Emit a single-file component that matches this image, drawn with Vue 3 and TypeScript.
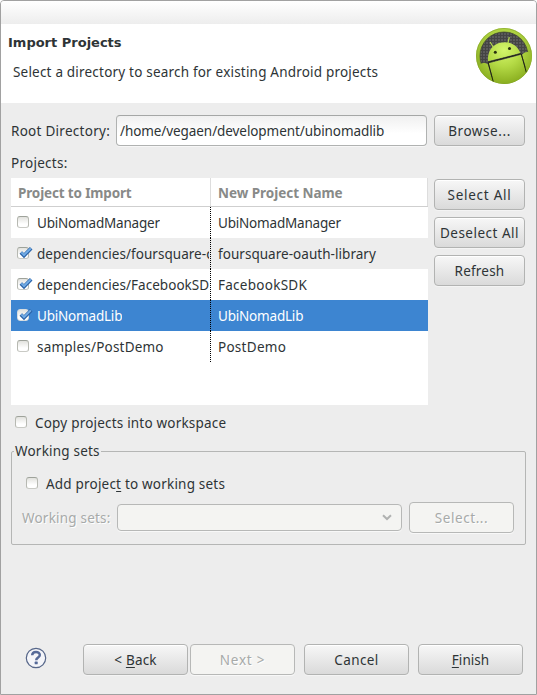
<script setup lang="ts">
import { ref } from 'vue'

interface Project {
  path: string
  name: string
  checked: boolean
  pathTrack: string
  nameTrack: string
}

const rootDirectory = ref('/home/vegaen/development/ubinomadlib')
const selected = ref('UbiNomadLib')
const copyProjects = ref(false)
const addToSets = ref(false)

const projects = ref<Project[]>([
  { path: 'UbiNomadManager', name: 'UbiNomadManager', checked: false, pathTrack: 'tn2', nameTrack: 'tn2' },
  { path: 'dependencies/foursquare-oauth-library', name: 'foursquare-oauth-library', checked: true, pathTrack: 't0', nameTrack: 't0' },
  { path: 'dependencies/FacebookSDK', name: 'FacebookSDK', checked: true, pathTrack: 't0', nameTrack: 't3' },
  { path: 'UbiNomadLib', name: 'UbiNomadLib', checked: true, pathTrack: 'tn2', nameTrack: 'tn2' },
  { path: 'samples/PostDemo', name: 'PostDemo', checked: false, pathTrack: 't2', nameTrack: 't3' },
])
</script>

<template>
  <main class="window">
    <div class="titlebar"></div>
    <header class="banner">
      <div>
        <h1>Import Projects</h1>
        <p class="t2">Select a directory to search for existing Android projects</p>
      </div>
      <svg class="logo" width="58" height="58" viewBox="475 27 58 58">
        <defs>
          <linearGradient id="rim" x1="0" y1="0" x2="0" y2="1">
            <stop offset="0" stop-color="#b2d644" />
            <stop offset="1" stop-color="#7b9f17" />
          </linearGradient>
          <radialGradient id="skin" gradientUnits="userSpaceOnUse" cx="504" cy="50" r="36">
            <stop offset="0" stop-color="#d4f56c" />
            <stop offset="0.45" stop-color="#b4da45" />
            <stop offset="1" stop-color="#84a81a" />
          </radialGradient>
          <pattern id="mesh" width="3" height="3" patternUnits="userSpaceOnUse">
            <rect width="3" height="3" fill="#444" />
            <rect width="2" height="2" fill="#5a5a5a" />
          </pattern>
          <clipPath id="disc"><circle cx="504" cy="56" r="27.6" /></clipPath>
        </defs>
        <circle cx="504" cy="56" r="28" fill="url(#rim)" />
        <circle cx="504" cy="56" r="27.5" fill="none" stroke="#86a62c" stroke-width="0.7" />
        <circle cx="504" cy="56" r="24" fill="url(#mesh)" stroke="#3c4130" stroke-width="0.7" />
        <g clip-path="url(#disc)">
          <g fill="url(#skin)">
            <path d="M488 61.3C487 51 493 44.5 500 42.8C508.5 40.8 517 44 520.3 53Z" />
            <path d="M488.6 63.3L521 54.8L527 75Q512 90 493.8 82Z" />
            <path d="M479 66Q483 60.5 488 64.5L493 83H484L475 70Z" />
            <path d="M522 55Q525 50 532 53L534 66L528 75Z" />
          </g>
          <path d="M488 62.3L521 53.8M488.3 63L493.3 82M521.3 54L526.5 73" fill="none" stroke="#20270e" stroke-width="1" />
          <path d="M492.9 46.5L490.4 42.5M508 42.8L509.2 37.5" stroke="#b7db4f" stroke-width="1.2" stroke-linecap="round" />
          <circle cx="495.3" cy="52.2" r="1.5" fill="#29310f" />
          <circle cx="509.5" cy="48.5" r="1.5" fill="#29310f" />
        </g>
      </svg>
    </header>

    <section class="content">
      <div class="root-row">
        <label class="root-label t3">Root Directory:</label>
        <div class="entry"><span class="tn06">{{ rootDirectory }}</span></div>
        <button class="btn side"><span class="t6">Browse...</span></button>
      </div>

      <div class="projects-label t3">Projects:</div>
      <div class="project-area">
        <div class="table">
          <div class="thead">
            <div class="col-a b1">Project to Import</div>
            <div class="col-b b3">New Project Name</div>
          </div>
          <div
            v-for="(p, i) in projects"
            :key="p.path"
            class="row"
            :class="{ odd: i % 2 === 1, sel: p.name === selected }"
            @click="selected = p.name"
          >
            <div class="cell-a">
              <span class="check" :class="{ pale: p.name === selected }" @click.stop="p.checked = !p.checked">
                <svg v-if="p.checked" class="tick" width="18" height="15" viewBox="0 0 18 15">
                  <path d="M3.8 7.4L7 10.6L14.2 3.2" fill="none" stroke="#2a62a6" stroke-width="3.6" />
                  <path d="M4.3 7.4L7 10L13.8 3.4" fill="none" stroke="#72ace6" stroke-width="2" />
                </svg>
              </span>
              <span class="path" :class="p.pathTrack">{{ p.path }}</span>
            </div>
            <div class="cell-b" :class="p.nameTrack">{{ p.name }}</div>
          </div>
        </div>
        <div class="side-buttons">
          <button class="btn side"><span class="t7">Select All</span></button>
          <button class="btn side"><span class="t5">Deselect All</span></button>
          <button class="btn side"><span class="t2">Refresh</span></button>
        </div>
      </div>

      <div class="copy-row" @click="copyProjects = !copyProjects">
        <span class="check"></span><span class="t2">Copy projects into workspace</span>
      </div>

      <fieldset class="sets">
        <legend class="t2">Working sets</legend>
        <div class="add-row" @click="addToSets = !addToSets">
          <span class="check"></span><span class="t2">Add projec<u>t</u> to working sets</span>
        </div>
        <div class="sets-row">
          <span class="sets-label t2">Working sets:</span>
          <div class="combo">
            <svg width="10" height="7" viewBox="0 0 10 7"><path d="M1 1.2L5 5L9 1.2" fill="none" stroke="#b0b2b1" stroke-width="2" /></svg>
          </div>
          <button class="btn wide off"><span class="t6">Select...</span></button>
        </div>
      </fieldset>
    </section>

    <footer class="actions">
      <svg class="help" width="22" height="22" viewBox="0 0 22 22">
        <circle cx="11" cy="11" r="9.7" fill="#f4f5f9" stroke="#566689" stroke-width="1.2" />
        <path d="M7.2 8.3C7.2 3.8 14.8 3.8 14.8 8.1C14.8 10.6 11.2 10.5 11.2 13.3" fill="none" stroke="#566a98" stroke-width="2.5" />
        <rect x="9.7" y="14.6" width="3" height="2.7" rx="0.6" fill="#566a98" />
      </svg>
      <button class="btn wide back"><span class="t2">&lt; <u>B</u>ack</span></button>
      <button class="btn wide off next"><span class="t7">Next &gt;</span></button>
      <button class="btn wide cancel"><span class="t4">Cancel</span></button>
      <button class="btn wide finish"><span class="t0"><u>F</u>inish</span></button>
    </footer>
  </main>
</template>

<style>
body { background: #fff; }
</style>

<style scoped>
* { box-sizing: border-box; }
.window {
  width: 537px;
  height: 695px;
  display: flex;
  flex-direction: column;
  border: 1px solid #a1a1a1;
  border-radius: 4px 4px 0 0;
  background: #ededed;
  color: #2e3436;
  font: 13.5px/18px "Noto Sans", "Open Sans", sans-serif;
  overflow: hidden;
  white-space: nowrap;
}
.titlebar { height: 23px; background: linear-gradient(#fff, #ededed); }
.banner {
  height: 79px;
  padding: 3px 3px 0 7px;
  display: flex;
  justify-content: space-between;
  background: #fff;
}
h1 { margin: 7px 0 0; font: bold 13px/18px "DejaVu Sans", sans-serif; }
p { margin: 11px 0 0 5px; }
.logo { display: block; }
.content { padding: 12px 10px 0; }
.root-row { display: flex; align-items: center; }
.root-label { width: 105px; }
.entry {
  width: 311px;
  height: 31px;
  padding: 6px 3px 0;
  border: 1px solid #b0b2b1;
  border-top-color: #a5a7a6;
  border-radius: 4px;
  background: linear-gradient(#f0f0f0, #fff 60%);
  box-shadow: 0 1px 0 #f7f7f7;
}
.btn {
  height: 31px;
  padding: 1px 0 0;
  border: 1px solid #b2b3b2;
  border-radius: 4px;
  background: linear-gradient(#f7f7f7, #dadada);
  box-shadow: inset 0 1px 0 #fff, 0 1px 0 #f4f4f4;
  color: inherit;
  font: inherit;
  text-align: center;
}
.side { width: 91px; }
.root-row .side { margin-left: 7px; }
.wide { width: 105px; }
.off {
  background: #f4f4f2;
  border-color: #b7b8b7;
  color: #a7aaa9;
  box-shadow: 0 1px 0 #f8f8f8;
  text-shadow: 1px 1px 0 #fff;
}
.projects-label { margin-top: 8px; }
.project-area { display: flex; gap: 6px; margin-top: 6px; }
.table { width: 417px; height: 227px; background: #fff; }
.thead {
  height: 29px;
  display: flex;
  border-bottom: 1px solid #cfcfcf;
  color: #888a88;
  font: bold 13.5px/31px "Noto Sans", sans-serif;
}
.col-a { width: 200px; padding-left: 7px; border-right: 1px solid #ddd; }
.col-b { flex: 1; padding-left: 7px; border-right: 1px solid #ddd; }
.row { height: 31px; display: flex; line-height: 32px; }
.odd { background: #ededed; }
.sel { background: #3d85d1; color: #fff; }
.cell-a {
  flex: none;
  width: 200px;
  height: 31px;
  padding: 0 2px 0 6px;
  display: flex;
  background: repeating-linear-gradient(#000 0 1px, transparent 1px 2px) right top / 1px 31px no-repeat;
}
.path { min-width: 0; margin-left: 8px; overflow: hidden; }
.cell-b { padding-left: 7px; }
.check {
  position: relative;
  flex: none;
  width: 12px;
  height: 12px;
  border: 1px solid #aeb0a9;
  border-color: #9ea29a #b7b9b2 #c9cac5;
  border-radius: 3px;
  background: linear-gradient(#e2e2de, #fff 70%);
}
.cell-a .check { margin-top: 9px; }
.pale { border-color: #d8dde0; }
.tick { position: absolute; left: -1px; top: -3px; }
.side-buttons { display: flex; flex-direction: column; gap: 7px; padding-top: 1px; }
.copy-row { display: flex; align-items: center; gap: 8px; margin: 9px 0 0 4px; }
.copy-row .check, .add-row .check { margin-top: -2px; }
.sets {
  width: 515px;
  height: 103px;
  margin: 10px 0 0;
  padding: 0 10px;
  border: 1px solid #b5b6b5;
  border-radius: 2px;
}
legend { margin-left: -8px; padding: 0 1px 0 1px; line-height: 18px; }
.add-row { display: flex; align-items: center; gap: 8px; margin: 15px 0 0 4px; }
.sets-row { display: flex; align-items: center; margin-top: 9px; }
.sets-label { width: 95px; color: #a7aaa9; text-shadow: 1px 1px 0 #fff; }
.combo {
  width: 285px;
  height: 27px;
  padding-right: 9px;
  display: flex;
  align-items: center;
  justify-content: flex-end;
  border: 1px solid #b7b8b7;
  border-radius: 4px;
  background: #f4f4f2;
  box-shadow: 0 1px 0 #f8f8f8;
}
.sets-row .wide { margin-left: 7px; }
.actions { display: flex; align-items: center; margin-top: auto; padding: 0 0 19px 24px; }
.help { margin-bottom: 3px; }
.back { margin-left: 36px; }
.next { margin-left: 2px; }
.cancel, .finish { margin-left: 9px; }
u { text-decoration-thickness: 1px; text-underline-offset: 2px; text-decoration-skip-ink: none; }

.tn2 { letter-spacing: -0.2px; }
.tn06 { letter-spacing: -0.08px; }
.t0 { letter-spacing: 0.04px; }
.t2 { letter-spacing: 0.2px; }
.t3 { letter-spacing: 0.27px; }
.t4 { letter-spacing: 0.4px; }
.t5 { letter-spacing: 0.5px; }
.t6 { letter-spacing: 0.57px; }
.t7 { letter-spacing: 0.74px; }
.b1 { letter-spacing: -0.15px; }
.b3 { letter-spacing: -0.03px; }
</style>
